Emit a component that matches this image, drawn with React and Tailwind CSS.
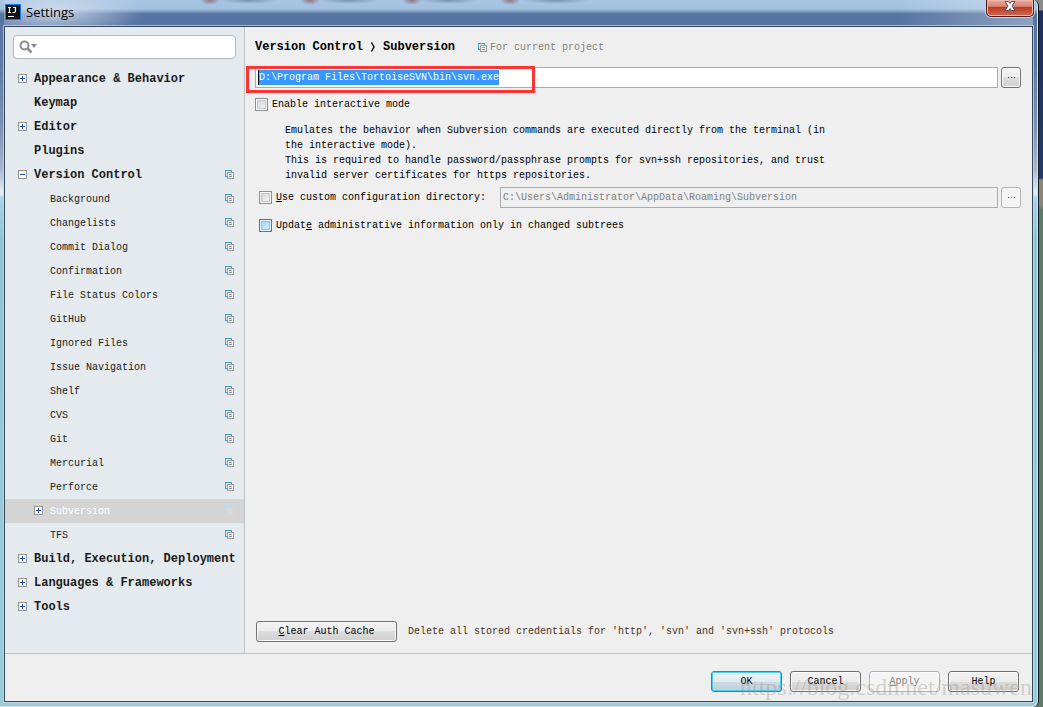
import React, { useState } from "react";

const mono = "font-['Liberation_Mono',monospace]";

function CopyIcon({ faded }) {
  return (
    <svg width="9" height="9" viewBox="0 0 9 9" shapeRendering="crispEdges" className="shrink-0" aria-hidden="true">
      <path d="M0 0h7v2H6V1H1v5h1v1H0z" fill={faded ? "#b5dbf2" : "#459fc8"} />
      <path d="M2 2h7v7H2z" fill={faded ? "#d8d8d8" : "#9a9a9a"} />
      <path d="M3 3h5v5H3z" fill={faded ? "#d4d4d4" : "#eef1f3"} />
      <path d="M4 4h3v1H4zM4 6h3v1H4z" fill={faded ? "#dadada" : "#9a9a9a"} />
    </svg>
  );
}

function Toggle({ open }) {
  return (
    <svg width="9" height="9" viewBox="0 0 9 9" shapeRendering="crispEdges" aria-hidden="true">
      <path d="M0 0h9v9H0z" fill="#939393" />
      <path d="M1 1h7v7H1z" fill="#fbfbfb" />
      <path d={open ? "M2 4h5v1H2z" : "M2 4h5v1H2zM4 2h1v5H4z"} fill="#2a4fae" />
    </svg>
  );
}

const items = [
  { t: "Appearance & Behavior", top: true, toggle: "closed" },
  { t: "Keymap", top: true },
  { t: "Editor", top: true, toggle: "closed" },
  { t: "Plugins", top: true },
  { t: "Version Control", top: true, toggle: "open", copy: true },
  { t: "Background", copy: true },
  { t: "Changelists", copy: true },
  { t: "Commit Dialog", copy: true },
  { t: "Confirmation", copy: true },
  { t: "File Status Colors", copy: true },
  { t: "GitHub", copy: true },
  { t: "Ignored Files", copy: true },
  { t: "Issue Navigation", copy: true },
  { t: "Shelf", copy: true },
  { t: "CVS", copy: true },
  { t: "Git", copy: true },
  { t: "Mercurial", copy: true },
  { t: "Perforce", copy: true },
  { t: "Subversion", toggle: "closed", copy: true, selected: true },
  { t: "TFS", copy: true },
  { t: "Build, Execution, Deployment", top: true, toggle: "closed" },
  { t: "Languages & Frameworks", top: true, toggle: "closed" },
  { t: "Tools", top: true, toggle: "closed" },
];

function TreeItem({ item }) {
  return (
    <li>
      <button
        type="button"
        className={
          "flex h-6 w-full items-center pr-[10px] text-left whitespace-nowrap " +
          (item.top ? "pl-[13px] text-[12px] font-bold " : "pl-[29px] text-[10px] ") +
          (item.selected ? "bg-[#d4d4d4] text-white" : "text-[#1a1a1a]")
        }
      >
        <span className="w-4 shrink-0 pb-[2px]">{item.toggle && <Toggle open={item.toggle === "open"} />}</span>
        <span className="grow">{item.t}</span>
        {item.copy && <span className="pb-[2px]"><CopyIcon faded={item.selected} /></span>}
      </button>
    </li>
  );
}

function Check({ id, blue, children }) {
  return (
    <div className="flex h-[13px] items-center gap-1">
      <input
        id={id}
        type="checkbox"
        className={
          "size-[13px] shrink-0 appearance-none border checked:bg-[#4d90c8] " +
          (blue
            ? "border-[#3c7fb1] bg-linear-to-br from-[#8fd0f7] to-[#e2f4fd] shadow-[inset_0_0_0_1px_#dff2fc,inset_0_0_0_2px_#86c6ef]"
            : "border-[#8e8f8f] bg-linear-to-br from-[#cfd2d8] to-[#f6f6f6] shadow-[inset_0_0_0_1px_#f6f6f6,inset_0_0_0_2px_#c5c8cc]")
        }
      />
      <label htmlFor={id} className="whitespace-nowrap">{children}</label>
    </div>
  );
}

function Button({ children, className = "", look = "normal", ...rest }) {
  const looks = {
    normal: "border-[#707070] text-black bg-[linear-gradient(#f3f3f3,#ebebeb_50%,#dddddd_50%,#cfcfcf)] shadow-[inset_0_0_0_1px_#fafafa]",
    primary: "border-[#3c7fb1] text-black bg-[linear-gradient(#eef4f8,#e2ebf1_50%,#cddbe5_50%,#bfd0dc)] shadow-[inset_0_0_0_1px_#48d0f5]",
    disabled: "border-[#adb2b5] text-[#838383] bg-[#f4f4f4] shadow-[inset_0_0_0_1px_#fafafa]",
  };
  return (
    <button type="button" className={"h-[21px] rounded-[3px] border text-[10px] " + looks[look] + " " + className} {...rest}>
      {children}
    </button>
  );
}

export default function App() {
  const [path, setPath] = useState("D:\\Program Files\\TortoiseSVN\\bin\\svn.exe");
  return (
    <div className="flex min-h-screen bg-[linear-gradient(#8a8a8a_0,#8a8a8a_10px,#1d2f5a_11px,#253a68_178px,#8a8678_180px,#8a8678_205px,#5f7a6c_210px,#5d7a6a)] pr-1">
      <div className="flex grow flex-col rounded-r-md border-r border-[#101c24] bg-[linear-gradient(#a9c6e4_0,#a3c0df_9px,#5674a2_14px,#5c78a6_60px,#7f93b8_130px,#aab6cf_170px,#e4eef5_192px,#e4eef5_194px,#a8d3e6_198px,#93c4d3_240px,#9ccbd9_100%)] pr-[5px] pb-[5px] pl-1 shadow-[inset_-1px_-1px_0_#d3e4ef]">
        <header className="flex h-[26px] items-start justify-between bg-[radial-gradient(ellipse_90px_26px_at_50px_12px,#d5e0eedd,#d5e0ee00),radial-gradient(ellipse_10px_5px_at_206px_0,#8d5a62cc,#8d5a6200),radial-gradient(ellipse_30px_4px_at_245px_0,#5d7896aa,#5d789600),radial-gradient(ellipse_10px_5px_at_306px_0,#8d5a62cc,#8d5a6200),radial-gradient(ellipse_30px_4px_at_345px_0,#5d7896aa,#5d789600),radial-gradient(ellipse_10px_5px_at_408px_0,#8d5a62cc,#8d5a6200),radial-gradient(ellipse_30px_4px_at_445px_0,#5d7896aa,#5d789600),radial-gradient(ellipse_10px_5px_at_506px_0,#8d5a62cc,#8d5a6200),radial-gradient(ellipse_35px_4px_at_552px_0,#5d7896aa,#5d789600),linear-gradient(90deg,#ffffff00_87%,#ffffff55_100%)]">
          <div className="flex items-center gap-[5px] pt-1 pl-px">
            <svg width="16" height="16" viewBox="0 0 16 16" aria-hidden="true">
              <rect width="16" height="16" fill="#087cfa" />
              <rect x="1" y="1" width="14" height="14" fill="#101010" />
              <path d="M3 3.500h3M4.500 3.500v5M3 8.500h3M8 3.500h2.500V7q0 1.500-1.500 1.500H7.500M3 12.500h6" fill="none" stroke="#fff" strokeWidth="1.200" />
            </svg>
            <h1 className="font-['Open_Sans',sans-serif] text-[13px] leading-4 text-black">Settings</h1>
          </div>
          <button type="button" aria-label="Close" className="mr-[-1px] flex h-[17px] w-[48px] items-center justify-center rounded-b-[5px] border border-t-0 border-[#4d1b1b] bg-[linear-gradient(#e8aa9e,#d98473_40%,#bd3a22_45%,#d06a50)] pb-1 shadow-[inset_0_0_0_1px_#f0b9ae,0_0_0_1px_#c5d3e6]">
            <svg width="12" height="10" viewBox="0 0 12 10" aria-hidden="true">
              <path d="M1 .5h3.500L6 2.500 7.500.5H11L8 5l3 4.500H7.500L6 7.500l-1.500 2H1L4 5z" fill="#fff" stroke="#4c5264" />
            </svg>
          </button>
        </header>

        <div className={"flex grow flex-col border border-[#33475e] bg-[#efefef] text-[10px] leading-[15px] text-black shadow-[0_0_0_1px_#c8dcecb0] " + mono}>
          <div className="flex grow">
            <aside className="flex w-[240px] shrink-0 flex-col border-r border-[#bfc3c6] bg-[#e5eaee]">
              <div className="mx-2 mt-2 mb-2 flex h-6 items-center rounded-[4px] border border-[#b5b8bb] bg-white pl-[5px]">
                <svg width="19" height="14" viewBox="0 0 19 14" className="shrink-0" aria-hidden="true">
                  <circle cx="5.500" cy="5.500" r="4" fill="none" stroke="#8c8c8c" strokeWidth="2" />
                  <path d="M8.500 8.500l4 4" stroke="#8c8c8c" strokeWidth="2.500" />
                  <path d="M12 4h6l-3 4z" fill="#8c8c8c" />
                </svg>
                <input type="search" aria-label="Search settings" className="min-w-0 grow bg-transparent outline-none" />
              </div>
              <ul>
                {items.map((item) => <TreeItem key={item.t} item={item} />)}
              </ul>
            </aside>

            <main className="flex min-w-0 grow flex-col pr-[11px] pl-[10px]">
              <div className="flex h-10 items-center whitespace-nowrap">
                <h2 className="flex items-center text-[12px] font-bold">
                  <span>Version Control</span>
                  <svg width="6" height="10" viewBox="0 0 6 10" className="mx-[7px]" aria-hidden="true">
                    <path d="M1.500 0.500L4 5 1.500 9.500" fill="none" stroke="#111" strokeWidth="1.500" />
                  </svg>
                  <span>Subversion</span>
                </h2>
                <div className="ml-[23px] flex items-center gap-[3px] text-[#808080]">
                  <CopyIcon />
                  <span>For current project</span>
                </div>
              </div>

              <div className="relative flex items-center gap-[3px]">
                <div className="flex h-[21px] grow items-center border border-[#ababab] bg-white pl-[2px]">
                  <div className="grid">
                    <span aria-hidden="true" className="invisible col-start-1 row-start-1 pr-px whitespace-pre">{path}</span>
                    <input
                      aria-label="Subversion executable"
                      value={path}
                      onChange={(e) => setPath(e.target.value)}
                      size="1"
                      className="col-start-1 row-start-1 w-full border-l border-black bg-[#3399ff] text-white outline-none"
                    />
                  </div>
                </div>
                <Button className="h-[19px] w-5" aria-label="Browse executable"><Dots /></Button>
                <div className="pointer-events-none absolute -top-px -left-[9px] h-[27px] w-[289px] border-3 border-[#fb3434]" />
              </div>

              <div className="mt-[10px]">
                <Check id="interactive">Enable interactive mode</Check>
              </div>
              <p className="mt-[12px] ml-[30px] max-w-[550px]">
                Emulates the behavior when Subversion commands are executed directly from the terminal (in the interactive mode).
                <br />
                This is required to handle password/passphrase prompts for svn+ssh repositories, and trust invalid server certificates for https repositories.
              </p>

              <div className="mt-1 ml-1 flex items-center">
                <Check id="custom"><u>U</u>se custom configuration directory:</Check>
                <input
                  aria-label="Configuration directory"
                  disabled
                  defaultValue="C:\Users\Administrator\AppData\Roaming\Subversion"
                  className="mr-[3px] ml-[14px] h-[21px] min-w-0 grow border border-[#ababab] bg-[#efefef] pl-[2px] text-[#808080]"
                />
                <Button look="disabled" className="h-[19px] w-5" disabled aria-label="Browse directory"><Dots /></Button>
              </div>
              <div className="mt-[11px] ml-1">
                <Check id="update" blue>Updat<u>e</u> administrative information only in changed subtrees</Check>
              </div>

              <div className="mt-auto mb-[11px] flex items-center gap-[11px] pl-px">
                <Button className="w-[141px]"><u>C</u>lear Auth Cache</Button>
                <p className="text-[#4a3326]">Delete all stored credentials for 'http', 'svn' and 'svn+ssh' protocols</p>
              </div>
            </main>
          </div>

          <footer className="relative flex h-12 items-center justify-end gap-2 border-t border-[#bfc1c3] pt-2 pr-[13px]">
            <Button look="primary" className="w-[71px]">OK</Button>
            <Button className="w-[71px]">Cancel</Button>
            <Button look="disabled" className="w-[71px]" disabled><u>A</u>pply</Button>
            <Button className="w-[71px]">Help</Button>
            <span className="pointer-events-none absolute right-0 bottom-0 font-['Liberation_Serif',serif] text-[24px] leading-7 text-[#9a9a8a]/40">https://blog.csdn.net/masuwen</span>
          </footer>
        </div>
      </div>
    </div>
  );
}

function Dots() {
  return (
    <svg width="7" height="1" viewBox="0 0 7 1" className="mx-auto" shapeRendering="crispEdges" aria-hidden="true">
      <path d="M0 0h1v1H0zM3 0h1v1H3zM6 0h1v1H6z" fill="#444" />
    </svg>
  );
}
